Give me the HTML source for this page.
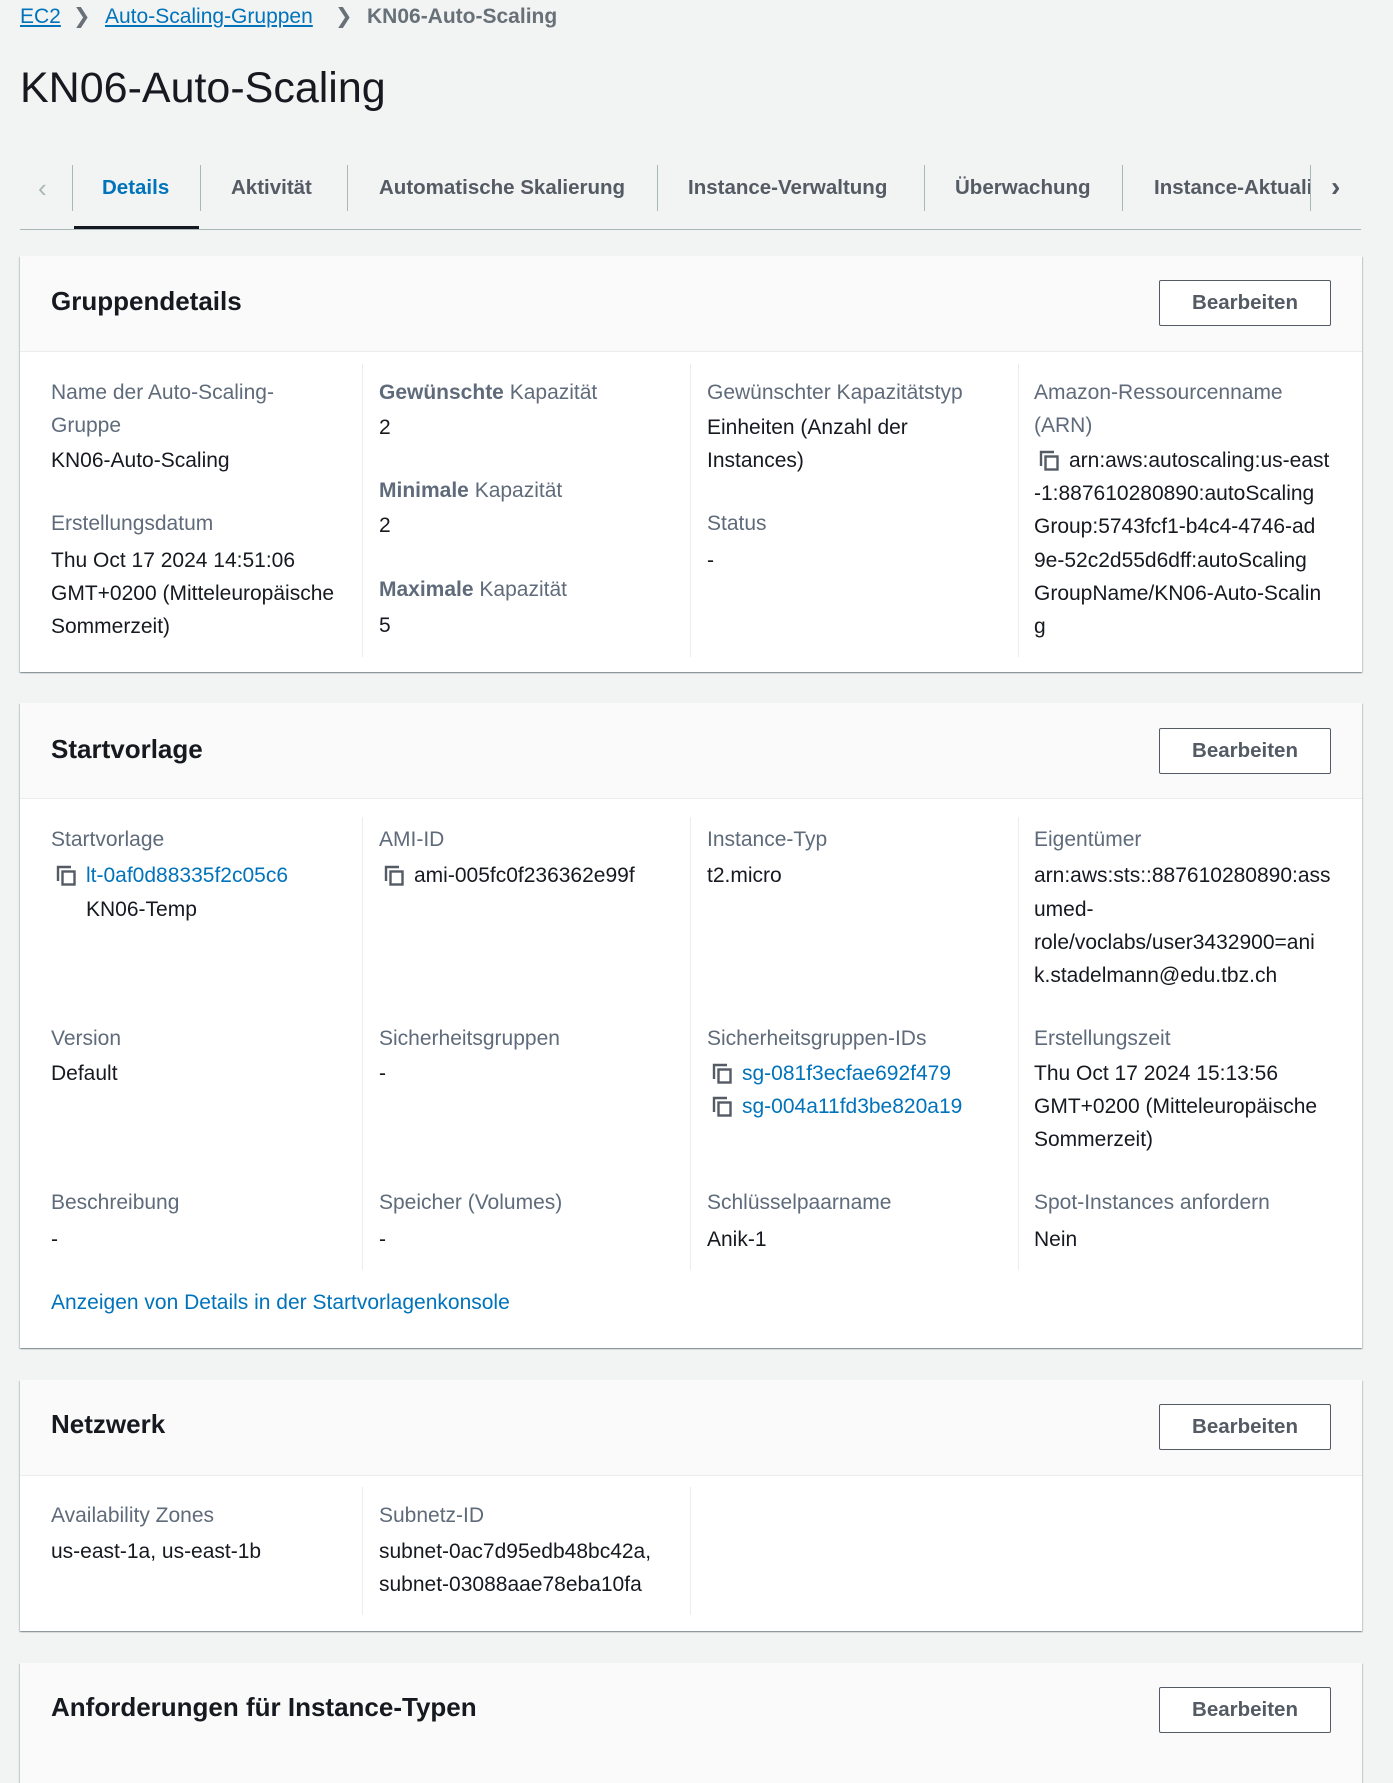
<!DOCTYPE html>
<html><head><meta charset="utf-8"><style>
body{margin:0;width:1393px;height:1731px;background:#f2f3f3;font-family:"Liberation Sans",sans-serif;position:relative;overflow:hidden;color:#16191f}
.t{position:absolute;line-height:33px;font-size:21px;white-space:nowrap}
.l{color:#5f6b7a}
.a{color:#0073bb}
.card{position:absolute;left:20px;width:1342px;background:#fff;box-shadow:0 1px 1px 0 rgba(0,28,36,.3),1px 1px 1px 0 rgba(0,28,36,.15),-1px 1px 1px 0 rgba(0,28,36,.15)}
.hd{position:absolute;left:0;top:0;width:100%;background:#fafafa;border-bottom:1px solid #eaeded}
.h2{position:absolute;left:31px;font-size:26px;font-weight:bold;line-height:32px;white-space:nowrap}
.btn{position:absolute;left:1139px;width:170px;height:44px;border:1px solid #545b64;border-radius:2px;background:#fff;color:#545b64;font-weight:bold;font-size:20.5px;text-align:center;line-height:44px}
.sep{position:absolute;width:1px;background:#eaeded}
.tab{position:absolute;top:172px;font-size:20.5px;font-weight:bold;color:#545b64;line-height:32px;white-space:nowrap}
.ts{position:absolute;top:165px;width:1px;height:46px;background:#aab7b8}
svg.c{position:absolute;width:22px;height:22px}
</style></head><body>
<div class="t" style="left:20px;top:0"><span class="a" style="text-decoration:underline">EC2</span></div>
<div class="t" style="left:73px;top:0;color:#687078">&#x276F;</div>
<div class="t" style="left:105px;top:0"><span class="a" style="text-decoration:underline">Auto-Scaling-Gruppen</span></div>
<div class="t" style="left:335px;top:0;color:#687078">&#x276F;</div>
<div class="t" style="left:367px;top:0;color:#687078;font-weight:bold">KN06-Auto-Scaling</div>
<div class="t" style="left:20px;top:64px;font-size:43px;line-height:48px">KN06-Auto-Scaling</div>

<div class="t" style="left:38px;top:172px;color:#aab7b8;font-size:26px">&#x2039;</div>
<div class="ts" style="left:72px"></div>
<div class="tab" style="left:102px;color:#0073bb">Details</div>
<div style="position:absolute;left:74px;top:226px;width:125px;height:3px;background:#16191f"></div>
<div class="ts" style="left:200px"></div>
<div class="tab" style="left:231px">Aktivität</div>
<div class="ts" style="left:347px"></div>
<div class="tab" style="left:379px">Automatische Skalierung</div>
<div class="ts" style="left:657px"></div>
<div class="tab" style="left:688px">Instance-Verwaltung</div>
<div class="ts" style="left:924px"></div>
<div class="tab" style="left:955px">Überwachung</div>
<div class="ts" style="left:1122px"></div>
<div style="position:absolute;left:1154px;top:172px;width:156px;height:34px;overflow:hidden"><div class="tab" style="position:static">Instance-Aktualisierung</div></div>
<div class="ts" style="left:1310px"></div>
<div class="t" style="left:1331px;top:170px;color:#545b64;font-size:28px;font-weight:bold">&#x203A;</div>
<div style="position:absolute;left:20px;top:229px;width:1341px;height:1px;background:#aab7b8"></div>

<svg width="0" height="0" style="position:absolute"><defs><symbol id="cp" viewBox="0 0 22 22"><path d="M2 16V2h13" fill="none" stroke="#545b64" stroke-width="2.4"/><rect x="6.5" y="6.5" width="12" height="13" fill="none" stroke="#545b64" stroke-width="2.4"/></symbol></defs></svg>

<!-- Card 1 -->
<div class="card" style="top:256px;height:416px">
<div class="hd" style="height:95px"></div>
<div class="h2" style="top:29px">Gruppendetails</div>
<div class="btn" style="top:24px">Bearbeiten</div>
<div class="sep" style="left:342px;top:108px;height:293px"></div>
<div class="sep" style="left:670px;top:108px;height:293px"></div>
<div class="sep" style="left:998px;top:108px;height:293px"></div>
</div>
<div class="t l" style="left:51px;top:376px">Name der Auto-Scaling-</div>
<div class="t l" style="left:51px;top:409px">Gruppe</div>
<div class="t" style="left:51px;top:444px">KN06-Auto-Scaling</div>
<div class="t l" style="left:51px;top:507px">Erstellungsdatum</div>
<div class="t" style="left:51px;top:544px">Thu Oct 17 2024 14:51:06</div>
<div class="t" style="left:51px;top:577px">GMT+0200 (Mitteleuropäische</div>
<div class="t" style="left:51px;top:610px">Sommerzeit)</div>
<div class="t l" style="left:379px;top:376px"><b>Gewünschte</b> Kapazität</div>
<div class="t" style="left:379px;top:411px">2</div>
<div class="t l" style="left:379px;top:474px"><b>Minimale</b> Kapazität</div>
<div class="t" style="left:379px;top:509px">2</div>
<div class="t l" style="left:379px;top:573px"><b>Maximale</b> Kapazität</div>
<div class="t" style="left:379px;top:609px">5</div>
<div class="t l" style="left:707px;top:376px">Gewünschter Kapazitätstyp</div>
<div class="t" style="left:707px;top:411px">Einheiten (Anzahl der</div>
<div class="t" style="left:707px;top:444px">Instances)</div>
<div class="t l" style="left:707px;top:507px">Status</div>
<div class="t" style="left:707px;top:544px">-</div>
<div class="t l" style="left:1034px;top:376px">Amazon-Ressourcenname</div>
<div class="t l" style="left:1034px;top:409px">(ARN)</div>
<svg class="c" style="left:1039px;top:450px"><use href="#cp"/></svg>
<div class="t" style="left:1069px;top:444px">arn:aws:autoscaling:us-east</div>
<div class="t" style="left:1034px;top:477px">-1:887610280890:autoScaling</div>
<div class="t" style="left:1034px;top:510px">Group:5743fcf1-b4c4-4746-ad</div>
<div class="t" style="left:1034px;top:544px">9e-52c2d55d6dff:autoScaling</div>
<div class="t" style="left:1034px;top:577px">GroupName/KN06-Auto-Scalin</div>
<div class="t" style="left:1034px;top:610px">g</div>

<!-- Card 2 -->
<div class="card" style="top:703px;height:645px">
<div class="hd" style="height:95px"></div>
<div class="h2" style="top:30px">Startvorlage</div>
<div class="btn" style="top:25px">Bearbeiten</div>
<div class="sep" style="left:342px;top:114px;height:453px"></div>
<div class="sep" style="left:670px;top:114px;height:453px"></div>
<div class="sep" style="left:998px;top:114px;height:453px"></div>
</div>
<div class="t l" style="left:51px;top:823px">Startvorlage</div>
<svg class="c" style="left:56px;top:865px"><use href="#cp"/></svg>
<div class="t a" style="left:86px;top:859px">lt-0af0d88335f2c05c6</div>
<div class="t" style="left:86px;top:893px">KN06-Temp</div>
<div class="t l" style="left:51px;top:1022px">Version</div>
<div class="t" style="left:51px;top:1057px">Default</div>
<div class="t l" style="left:51px;top:1186px">Beschreibung</div>
<div class="t" style="left:51px;top:1223px">-</div>
<div class="t a" style="left:51px;top:1286px">Anzeigen von Details in der Startvorlagenkonsole</div>
<div class="t l" style="left:379px;top:823px">AMI-ID</div>
<svg class="c" style="left:384px;top:865px"><use href="#cp"/></svg>
<div class="t" style="left:414px;top:859px">ami-005fc0f236362e99f</div>
<div class="t l" style="left:379px;top:1022px">Sicherheitsgruppen</div>
<div class="t" style="left:379px;top:1057px">-</div>
<div class="t l" style="left:379px;top:1186px">Speicher (Volumes)</div>
<div class="t" style="left:379px;top:1223px">-</div>
<div class="t l" style="left:707px;top:823px">Instance-Typ</div>
<div class="t" style="left:707px;top:859px">t2.micro</div>
<div class="t l" style="left:707px;top:1022px">Sicherheitsgruppen-IDs</div>
<svg class="c" style="left:712px;top:1063px"><use href="#cp"/></svg>
<div class="t a" style="left:742px;top:1057px">sg-081f3ecfae692f479</div>
<svg class="c" style="left:712px;top:1096px"><use href="#cp"/></svg>
<div class="t a" style="left:742px;top:1090px">sg-004a11fd3be820a19</div>
<div class="t l" style="left:707px;top:1186px">Schlüsselpaarname</div>
<div class="t" style="left:707px;top:1223px">Anik-1</div>
<div class="t l" style="left:1034px;top:823px">Eigentümer</div>
<div class="t" style="left:1034px;top:859px">arn:aws:sts::887610280890:ass</div>
<div class="t" style="left:1034px;top:893px">umed-</div>
<div class="t" style="left:1034px;top:926px">role/voclabs/user3432900=ani</div>
<div class="t" style="left:1034px;top:959px">k.stadelmann@edu.tbz.ch</div>
<div class="t l" style="left:1034px;top:1022px">Erstellungszeit</div>
<div class="t" style="left:1034px;top:1057px">Thu Oct 17 2024 15:13:56</div>
<div class="t" style="left:1034px;top:1090px">GMT+0200 (Mitteleuropäische</div>
<div class="t" style="left:1034px;top:1123px">Sommerzeit)</div>
<div class="t l" style="left:1034px;top:1186px">Spot-Instances anfordern</div>
<div class="t" style="left:1034px;top:1223px">Nein</div>

<!-- Card 3 -->
<div class="card" style="top:1380px;height:251px">
<div class="hd" style="height:95px"></div>
<div class="h2" style="top:28px">Netzwerk</div>
<div class="btn" style="top:24px">Bearbeiten</div>
<div class="sep" style="left:342px;top:107px;height:128px"></div>
<div class="sep" style="left:670px;top:107px;height:128px"></div>
</div>
<div class="t l" style="left:51px;top:1499px">Availability Zones</div>
<div class="t" style="left:51px;top:1535px">us-east-1a, us-east-1b</div>
<div class="t l" style="left:379px;top:1499px">Subnetz-ID</div>
<div class="t" style="left:379px;top:1535px">subnet-0ac7d95edb48bc42a,</div>
<div class="t" style="left:379px;top:1568px">subnet-03088aae78eba10fa</div>

<!-- Card 4 -->
<div class="card" style="top:1663px;height:120px">
<div class="hd" style="height:120px;border:none"></div>
<div class="h2" style="top:28px">Anforderungen für Instance-Typen</div>
<div class="btn" style="top:24px">Bearbeiten</div>
</div>
</body></html>
